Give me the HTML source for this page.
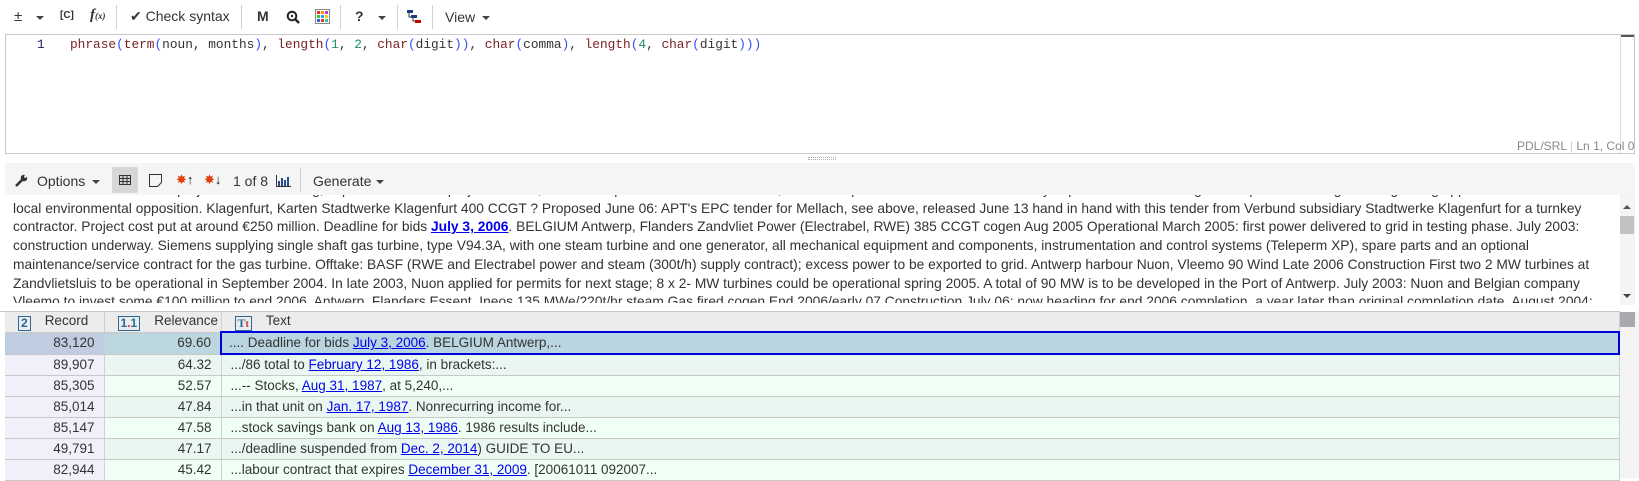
<!DOCTYPE html>
<html><head><meta charset="utf-8"><style>
*{box-sizing:border-box;margin:0;padding:0}
body{width:1639px;height:478px;overflow:hidden;background:#fff;font-family:"Liberation Sans",sans-serif;color:#333;position:relative}
.a{position:absolute;white-space:nowrap}
.sep{position:absolute;width:1px;background:#d0d0d0}
.tb{font-size:14px;color:#333}
.caret{position:absolute;width:0;height:0;border-left:4px solid transparent;border-right:4px solid transparent;border-top:4px solid #444}
.code{font-family:"Liberation Mono",monospace;font-size:12.8px}
.f{color:#7a1f22}.p{color:#3050f0}.n{color:#1d8f6a}.w{color:#333}
#txt{position:absolute;left:0;top:195px;width:1620px;height:108px;overflow:hidden;background:#fff}
#txt .l{white-space:nowrap;font-size:13.8px;line-height:18.7px;color:#333}
a{color:#0000ee;text-decoration:underline}
table{position:absolute;left:5px;top:312px;border-collapse:collapse;font-size:13.5px;width:1615px;table-layout:fixed}
td{height:21px;line-height:20px;border-bottom:1px solid #c8c8c8;border-right:1px solid #d0d0d0;white-space:nowrap;overflow:hidden;padding:0 9px}
td.r{text-align:right}
td.v{text-align:right}
th{height:19px;line-height:18px;background:#ececec;font-weight:normal;text-align:left;border-right:1px solid #d0d0d0;border-bottom:1px solid #c8c8c8;padding:0 0 0 13px;font-size:13.5px;white-space:nowrap;overflow:hidden}
.ic{display:inline-block;border:1px solid #2a6a9a;color:#2a6a9a;font-size:12px;line-height:13px;height:15px;padding:0 2px;margin-right:14px;font-weight:bold;vertical-align:-2px}
tr.o td.r{background:#f1f0fa}tr.o td.x{background:#eaf7f0}
tr.e td.r{background:#f1f0fa}tr.e td.x{background:#f0fff6}
</style></head><body>
<div class="a tb" style="left:14px;top:8px;font-size:15px">±</div>
<div class="caret" style="left:36px;top:16px"></div>
<div class="a" style="left:60px;top:10px;font-size:10px;font-weight:bold">[C]</div>
<div class="a" style="left:90px;top:7px;font-family:'Liberation Serif',serif;font-style:italic;font-weight:bold;font-size:15px">f<span style="font-size:9px">(x)</span></div>
<div class="sep" style="left:116px;top:5px;height:24px"></div>
<div class="a tb" style="left:130px;top:8px"><span style="font-size:14px">✔</span> Check syntax</div>
<div class="sep" style="left:241px;top:5px;height:24px"></div>
<div class="a" style="left:257px;top:8px;font-weight:bold;font-size:14px">M</div>
<svg class="a" style="left:286px;top:10px" width="14" height="14"><circle cx="6" cy="6" r="4.3" fill="none" stroke="#222" stroke-width="2"/><line x1="9" y1="9" x2="13" y2="13" stroke="#222" stroke-width="2.4"/><circle cx="6" cy="6" r="1.2" fill="#222"/></svg>
<svg class="a" style="left:315px;top:9px" width="15" height="15"><rect x=".5" y=".5" width="14" height="14" fill="#fff" stroke="#888"/><rect x="2" y="2" width="3" height="3" fill="#e33"/><rect x="6" y="2" width="3" height="3" fill="#f90"/><rect x="10" y="2" width="3" height="3" fill="#c3c"/><rect x="2" y="6" width="3" height="3" fill="#3c3"/><rect x="6" y="6" width="3" height="3" fill="#39f"/><rect x="10" y="6" width="3" height="3" fill="#fc0"/><rect x="2" y="10" width="3" height="3" fill="#36c"/><rect x="6" y="10" width="3" height="3" fill="#e33"/><rect x="10" y="10" width="3" height="3" fill="#3c9"/></svg>
<div class="sep" style="left:340px;top:5px;height:24px"></div>
<div class="a" style="left:355px;top:8px;font-weight:bold;font-size:14px">?</div>
<div class="caret" style="left:378px;top:16px"></div>
<div class="sep" style="left:397px;top:5px;height:24px"></div>
<svg class="a" style="left:406px;top:9px" width="16" height="15"><rect x="1" y="1" width="6" height="3" fill="#1a3a7a"/><rect x="5" y="6" width="6" height="3" fill="#1a3a7a"/><rect x="9" y="11" width="6" height="3" fill="#c00"/><path d="M3 4V8H5M7 9V12H9" stroke="#333" fill="none"/></svg>
<div class="sep" style="left:432px;top:5px;height:24px"></div>
<div class="a tb" style="left:445px;top:9px">View</div>
<div class="caret" style="left:482px;top:16px"></div>
<div class="a" style="left:5px;top:34px;width:1630px;height:120px;border:1px solid #c8c8c8"></div>
<div class="a" style="left:1620px;top:35px;width:1px;height:118px;background:#ddd"></div>
<div class="a" style="left:1621px;top:35px;width:13px;height:2px;background:#555"></div>
<div class="a code" style="left:37px;top:37px;color:#1a1a6a">1</div>
<div class="a code" style="left:70px;top:37px"><span class="f">phrase</span><span class="p">(</span><span class="f">term</span><span class="p">(</span><span class="w">noun, months</span><span class="p">)</span><span class="w">, </span><span class="f">length</span><span class="p">(</span><span class="n">1</span><span class="w">, </span><span class="n">2</span><span class="w">, </span><span class="f">char</span><span class="p">(</span><span class="w">digit</span><span class="p">))</span><span class="w">, </span><span class="f">char</span><span class="p">(</span><span class="w">comma</span><span class="p">)</span><span class="w">, </span><span class="f">length</span><span class="p">(</span><span class="n">4</span><span class="w">, </span><span class="f">char</span><span class="p">(</span><span class="w">digit</span><span class="p">)))</span></div>
<div class="a" style="left:1517px;top:139px;font-size:12px;color:#888">PDL/SRL <span style="color:#ccc">|</span> Ln 1, Col 0</div>
<div class="a" style="left:808px;top:157px;width:28px;height:3px;border-top:1px dotted #aaa;border-bottom:1px dotted #aaa"></div>
<div class="a" style="left:5px;top:163px;width:1630px;height:32px;background:#f5f5f5"></div>
<svg class="a" style="left:15px;top:174px" width="13" height="13"><path d="M1 12L7 6" stroke="#333" stroke-width="2.6"/><circle cx="9" cy="4" r="3.3" fill="#333"/><circle cx="10.5" cy="2.5" r="1.4" fill="#f5f5f5"/></svg>
<div class="a tb" style="left:37px;top:173px">Options</div>
<div class="caret" style="left:92px;top:180px"></div>
<div class="a" style="left:112px;top:167px;width:26px;height:26px;background:#d6d6d6;border-radius:2px"></div>
<svg class="a" style="left:119px;top:175px" width="12" height="10"><rect x=".5" y=".5" width="11" height="9" fill="none" stroke="#333"/><path d="M0 3.5H12M0 6.5H12M4 0V10M8 0V10" stroke="#333"/></svg>
<svg class="a" style="left:149px;top:174px" width="13" height="13"><path d="M.5 .5H12.5V8.5L8.5 12.5H.5Z" fill="none" stroke="#333"/></svg>
<div class="a" style="left:176px;top:172px;font-size:13px;color:#e04010">✸<span style="color:#111;font-weight:bold">↑</span></div>
<div class="a" style="left:204px;top:172px;font-size:13px;color:#e04010">✸<span style="color:#111;font-weight:bold">↓</span></div>
<div class="a tb" style="left:233px;top:173px">1 of 8</div>
<svg class="a" style="left:276px;top:175px" width="15" height="12"><path d="M.5 0V11.5H15" stroke="#333" fill="none"/><path d="M3 11V6M6 11V3M9 11V5M12 11V2" stroke="#2a4a8a" stroke-width="2"/></svg>
<div class="sep" style="left:300px;top:168px;height:24px"></div>
<div class="a tb" style="left:313px;top:173px">Generate</div>
<div class="caret" style="left:376px;top:180px"></div>
<div id="txt"><div style="margin-top:-14px;padding-left:13px">
<div class="l">Kärnten hand in hand with project for local heating, expected mid 2006 project in Graz; decision expected after local elections, with some political and financial uncertainty expected due to the negative impact on the region and growing opposition from the community; also</div>
<div class="l">local environmental opposition. Klagenfurt, Karten Stadtwerke Klagenfurt 400 CCGT ? Proposed June 06: APT's EPC tender for Mellach, see above, released June 13 hand in hand with this tender from Verbund subsidiary Stadtwerke Klagenfurt for a turnkey</div>
<div class="l">contractor. Project cost put at around €250 million. Deadline for bids <a style="font-weight:bold">July 3, 2006</a>. BELGIUM Antwerp, Flanders Zandvliet Power (Electrabel, RWE) 385 CCGT cogen Aug 2005 Operational March 2005: first power delivered to grid in testing phase. July 2003:</div>
<div class="l">construction underway. Siemens supplying single shaft gas turbine, type V94.3A, with one steam turbine and one generator, all mechanical equipment and components, instrumentation and control systems (Teleperm XP), spare parts and an optional</div>
<div class="l">maintenance/service contract for the gas turbine. Offtake: BASF (RWE and Electrabel power and steam (300t/h) supply contract); excess power to be exported to grid. Antwerp harbour Nuon, Vleemo 90 Wind Late 2006 Construction First two 2 MW turbines at</div>
<div class="l">Zandvlietsluis to be operational in September 2004. In late 2003, Nuon applied for permits for next stage; 8 x 2- MW turbines could be operational spring 2005. A total of 90 MW is to be developed in the Port of Antwerp. July 2003: Nuon and Belgian company</div>
<div class="l">Vleemo to invest some €100 million to end 2006. Antwerp, Flanders Essent, Ineos 135 MWe/220t/hr steam Gas fired cogen End 2006/early 07 Construction July 06: now heading for end 2006 completion, a year later than original completion date. August 2004:</div>
</div></div>
<div class="a" style="left:1620px;top:195px;width:15px;height:110px;background:#f4f4f4"></div>
<div class="caret" style="left:1623px;top:205px;border-top:none;border-bottom:4px solid #555"></div>
<div class="a" style="left:1620px;top:216px;width:14px;height:18px;background:#c1c1c1"></div>
<div class="caret" style="left:1623px;top:294px"></div>
<div class="a" style="left:0;top:311px;width:1620px;height:1px;background:#c8c8c8"></div>
<table>
<colgroup><col style="width:99px"><col style="width:117px"><col></colgroup>
<tr><th><span class="ic">2</span>Record</th><th><span class="ic">1<span style="color:#c33">.</span>1</span>Relevance</th><th><span class="ic" style="font-family:'Liberation Serif',serif">T<span style="color:#c33;font-size:10px">t</span></span>Text</th></tr>
<tr><td class="r" style="background:#c0cde0">83,120</td><td class="v" style="background:#bcd6df">69.60</td><td style="background:#b9d5e0;border:2px solid #0000dd;padding-left:7px">.... Deadline for bids <a>July 3, 2006</a>. BELGIUM Antwerp,...</td></tr>
<tr class="o"><td class="r">89,907</td><td class="v x">64.32</td><td class="x">.../86 total to <a>February 12, 1986</a>, in brackets:...</td></tr>
<tr class="e"><td class="r">85,305</td><td class="v x">52.57</td><td class="x">...-- Stocks, <a>Aug 31, 1987</a>, at 5,240,...</td></tr>
<tr class="o"><td class="r">85,014</td><td class="v x">47.84</td><td class="x">...in that unit on <a>Jan. 17, 1987</a>. Nonrecurring income for...</td></tr>
<tr class="e"><td class="r">85,147</td><td class="v x">47.58</td><td class="x">...stock savings bank on <a>Aug 13, 1986</a>. 1986 results include...</td></tr>
<tr class="o"><td class="r">49,791</td><td class="v x">47.17</td><td class="x">.../deadline suspended from <a>Dec. 2, 2014</a>) GUIDE TO EU...</td></tr>
<tr class="e"><td class="r">82,944</td><td class="v x">45.42</td><td class="x">...labour contract that expires <a>December 31, 2009</a>. [20061011 092007...</td></tr>
</table>
<div class="a" style="left:1620px;top:312px;width:19px;height:166px;background:#f4f4f4"></div>
<div class="a" style="left:1620px;top:312px;width:15px;height:15px;background:#a9a9ad"></div>
</body></html>
